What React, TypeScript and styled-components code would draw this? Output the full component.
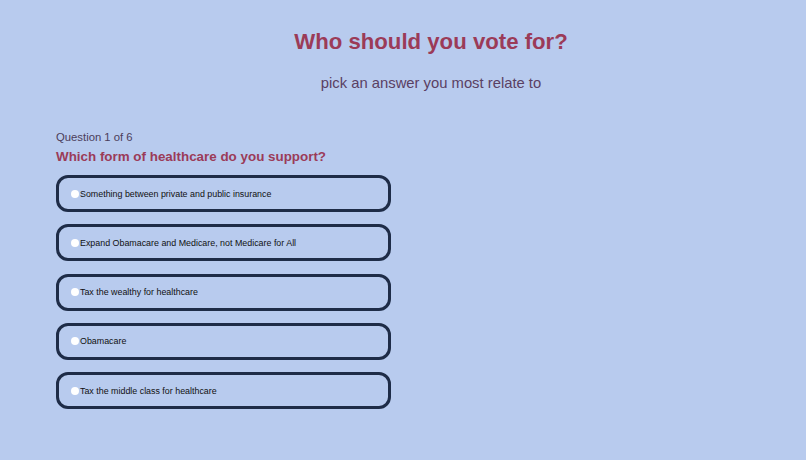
import React, { useState } from "react";
import styled, { createGlobalStyle } from "styled-components";

const Global = createGlobalStyle`
  html, body { margin: 0; padding: 0; background: #b8cbee; }
  body { font-family: "Liberation Sans", Arial, sans-serif; }
`;

const Page = styled.div`
  min-height: 460px;
  padding: 28px 0 0 56px;
  box-sizing: border-box;
`;

const Header = styled.header`
  display: flex;
  flex-direction: column;
  align-items: center;
`;

const Title = styled.h1`
  margin: 0;
  font-size: 22.2px;
  font-weight: 700;
  color: #9b3b58;
  line-height: 28px;
`;

const Subtitle = styled.p`
  margin: 17px 0 0;
  font-size: 14.8px;
  color: #5a4063;
  line-height: 20px;
`;

const Quiz = styled.section`
  margin-top: 36px;
  width: 335px;
  display: flex;
  flex-direction: column;
`;

const Counter = styled.div`
  font-size: 11.3px;
  color: #4b3d5b;
  line-height: 16px;
`;

const Question = styled.h2`
  margin: 3px 0 0;
  font-size: 13.4px;
  font-weight: 700;
  color: #9b3b58;
  line-height: 18px;
`;

const Options = styled.div`
  margin-top: 9px;
  display: flex;
  flex-direction: column;
  gap: 12.3px;
`;

const Option = styled.label`
  display: flex;
  align-items: center;
  height: 37px;
  box-sizing: border-box;
  border: 3px solid #1e2c47;
  border-radius: 12px;
  padding: 0 0 0 12px;
  font-size: 8.9px;
  color: #111;
  cursor: pointer;
`;

const Radio = styled.span<{ $on: boolean }>`
  width: 8px;
  height: 8px;
  border-radius: 50%;
  background: ${(p) => (p.$on ? "#1e2c47" : "#fff")};
  margin-right: 1px;
  flex-shrink: 0;
`;

const answers = [
  "Something between private and public insurance",
  "Expand Obamacare and Medicare, not Medicare for All",
  "Tax the wealthy for healthcare",
  "Obamacare",
  "Tax the middle class for healthcare",
];

export default function App() {
  const [sel, setSel] = useState<number | null>(null);
  return (
    <>
      <Global />
      <Page>
        <Header>
          <Title>Who should you vote for?</Title>
          <Subtitle>pick an answer you most relate to</Subtitle>
        </Header>
        <Quiz>
          <Counter>Question 1 of 6</Counter>
          <Question>Which form of healthcare do you support?</Question>
          <Options>
            {answers.map((a, i) => (
              <Option key={a} onClick={() => setSel(i)}>
                <Radio $on={sel === i} />
                {a}
              </Option>
            ))}
          </Options>
        </Quiz>
      </Page>
    </>
  );
}
